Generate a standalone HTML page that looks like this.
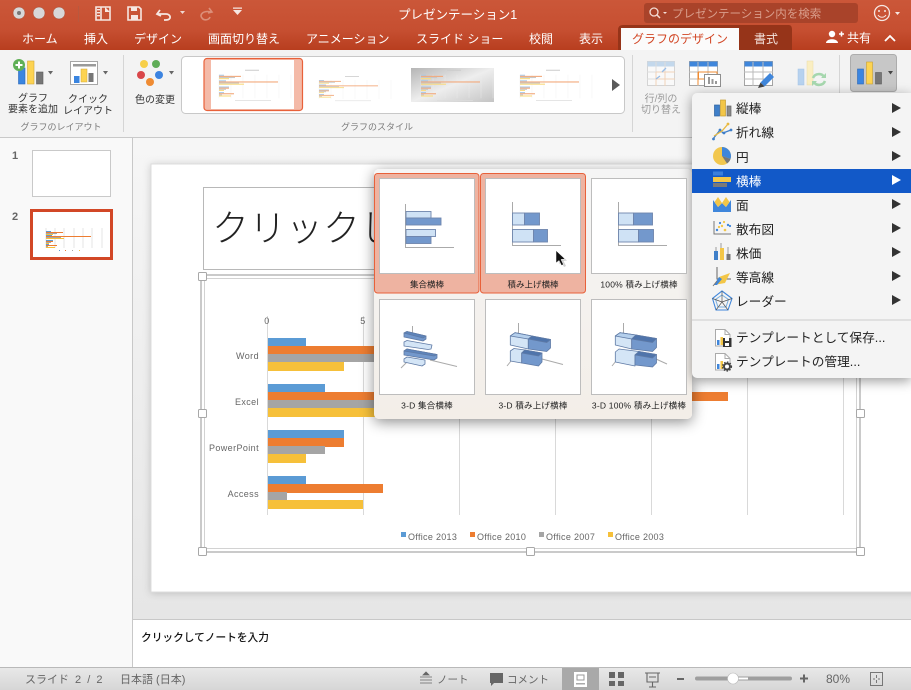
<!DOCTYPE html>
<html lang="ja"><head><meta charset="utf-8"><title>PowerPoint</title>
<style>
html,body{margin:0;padding:0;width:911px;height:690px;overflow:hidden;background:#f9f9f9}
svg{position:absolute;left:0;top:0;font-family:"Liberation Sans","Noto Sans CJK JP",sans-serif}
.pop{position:absolute;left:374px;top:169px;width:318px;height:250px;border-radius:5px;background:linear-gradient(#f5f5f5,#f3eee8);box-shadow:0 3px 14px rgba(0,0,0,.45)}
.menu{position:absolute;left:692px;top:93px;width:219px;height:285px;border-radius:5px 0 0 5px;background:#f4f4f4;box-shadow:0 3px 12px rgba(0,0,0,.4)}
</style></head><body>
<svg width="911" height="690" viewBox="0 0 911 690">
<defs>
<linearGradient id="tb" x1="0" y1="0" x2="0" y2="1"><stop offset="0" stop-color="#cb5739"/><stop offset=".6" stop-color="#c64f31"/><stop offset="1" stop-color="#b83e1f"/></linearGradient>
<linearGradient id="st" x1="0" y1="0" x2="0" y2="1"><stop offset="0" stop-color="#e8e8e8"/><stop offset="1" stop-color="#d6d6d6"/></linearGradient>
<linearGradient id="ed" x1="0" y1="0" x2="0" y2="1"><stop offset="0" stop-color="#f6f6f6"/><stop offset="1" stop-color="#e6e6e6"/></linearGradient>
<linearGradient id="gr3" x1="0" y1="0" x2="1" y2="1"><stop offset="0" stop-color="#b5b5b5"/><stop offset=".5" stop-color="#eeeeee"/><stop offset="1" stop-color="#c4c4c4"/></linearGradient>
<filter id="sl" x="-5%" y="-5%" width="110%" height="110%"><feDropShadow dx="0" dy="1" stdDeviation="4" flood-color="#000" flood-opacity=".18"/></filter>
<g id="mini">
<g stroke="#ececec" stroke-width=".5"><path d="M0 6V44M12 6V44M24 6V44M36 6V44M48 6V44M60 6V44M72 6V44"/></g>
<rect x="0" y="6" width="5" height="1.800" fill="#a9c8e6"/><rect x="0" y="7.800" width="22" height="1.800" fill="#f2a97c"/><rect x="0" y="9.600" width="16" height="1.800" fill="#c8c8c8"/><rect x="0" y="11.400" width="10" height="1.800" fill="#f9dc82"/>
<rect x="0" y="15" width="7" height="1.800" fill="#a9c8e6"/><rect x="0" y="16.800" width="59" height="1.800" fill="#f2a97c"/><rect x="0" y="18.600" width="20" height="1.800" fill="#c8c8c8"/><rect x="0" y="20.400" width="25" height="1.800" fill="#f9dc82"/>
<rect x="0" y="25" width="10" height="1.800" fill="#a9c8e6"/><rect x="0" y="26.800" width="10" height="1.800" fill="#f2a97c"/><rect x="0" y="28.600" width="7" height="1.800" fill="#c8c8c8"/><rect x="0" y="30.400" width="5" height="1.800" fill="#f9dc82"/>
<rect x="0" y="34" width="5" height="1.800" fill="#a9c8e6"/><rect x="0" y="35.800" width="15" height="1.800" fill="#f2a97c"/><rect x="0" y="37.600" width="3" height="1.800" fill="#c8c8c8"/><rect x="0" y="39.400" width="12" height="1.800" fill="#f9dc82"/>
<rect x="16" y="47" width="36" height="1.200" fill="#ddd"/>
<rect x="26" y="-2" width="14" height="1.600" fill="#ccc"/>
</g>
</defs>

<!-- base -->
<rect width="911" height="690" fill="#f9f9f9"/>
<rect x="133" y="138" width="778" height="482" fill="url(#ed)"/>
<rect x="132" y="138" width="1" height="530" fill="#c8c8c8"/>

<!-- title & tabs -->
<rect width="911" height="50" fill="url(#tb)"/>
<g fill="#d8d8d8" stroke="#a8492f" stroke-width=".5"><circle cx="19" cy="13" r="6"/><circle cx="39" cy="13" r="6"/><circle cx="59" cy="13" r="6"/></g>
<circle cx="19" cy="13" r="2" fill="#777"/>
<rect x="78" y="6" width="1" height="16" fill="#b9583e"/>
<g fill="none" stroke="#f6e7e2" stroke-width="1.6">
<path d="M96 7H110V20H96ZM101 7V20"/>
<path d="M128 7H139L141 9V20H128Z"/>
<path d="M160 10L157 14L161 16M158 14H166C171 14 172 20 166 20H164" stroke-width="1.8"/>
</g>
<rect x="97" y="9" width="3" height="1.4" fill="#f6e7e2"/><rect x="97" y="12" width="3" height="1.4" fill="#f6e7e2"/><rect x="97" y="15" width="3" height="1.4" fill="#f6e7e2"/>
<path d="M105 7L110 12H105Z" fill="#f6e7e2"/>
<rect x="131" y="7" width="6" height="4" fill="#f6e7e2"/><rect x="131" y="15" width="7" height="5" fill="#f6e7e2"/>
<path d="M180 11H185L182.500 14Z" fill="#f0d8d0"/>
<path d="M209 8L212 12L208 13M211 12C203 10 199 15 202 18C204 21 209 20 210 17" fill="none" stroke="#dc8f79" stroke-width="1.6"/>
<path d="M233 10H242L237.500 15ZM233 7.500H242V8.800H233Z" fill="#f6e7e2"/>
<text x="398" y="19" font-size="12.500" fill="#fff">プレゼンテーション1</text>
<rect x="644" y="3" width="214" height="20" rx="3" fill="#a9432a"/>
<circle cx="654" cy="12" r="4" fill="none" stroke="#f4ddd5" stroke-width="1.300"/><path d="M657 15L660 18" stroke="#f4ddd5" stroke-width="1.500"/><path d="M663 12H667L665 14Z" fill="#f4ddd5"/>
<text x="672" y="17.500" font-size="11.500" fill="#d99d8b">プレゼンテーション内を検索</text>
<circle cx="882" cy="13" r="7.500" fill="none" stroke="#f6e7e2" stroke-width="1.300"/><circle cx="879" cy="11" r="1" fill="#f6e7e2"/><circle cx="885" cy="11" r="1" fill="#f6e7e2"/><path d="M878 15C880 18 884 18 886 15" fill="none" stroke="#f6e7e2"/>
<path d="M895 12H900L897.500 15Z" fill="#f6e7e2"/>
<g font-size="12" fill="#fff">
<text x="22" y="43">ホーム</text><text x="84" y="43">挿入</text><text x="134" y="43">デザイン</text><text x="208" y="43">画面切り替え</text><text x="306" y="43">アニメーション</text><text x="416" y="43">スライド ショー</text><text x="529" y="43">校閲</text><text x="579" y="43">表示</text>
</g>
<path d="M618 50V30Q618 25 623 25H789Q792 25 792 30V50Z" fill="#963419"/>
<rect x="621" y="28" width="118" height="22" fill="#fbfbfb"/>
<text x="632" y="43" font-size="12" fill="#d24726">グラフのデザイン</text>
<text x="754" y="43" font-size="12" fill="#f3e2dc">書式</text>
<circle cx="832" cy="34" r="3.200" fill="#fff"/><path d="M826 43C826 38 838 38 838 43Z" fill="#fff"/><path d="M839 34H844M841.500 31.500V36.500" stroke="#fff" stroke-width="1.500"/>
<text x="847" y="42" font-size="12" fill="#fff">共有</text>
<path d="M885 41L890 36L895 41" fill="none" stroke="#fff" stroke-width="1.800"/>

<!-- ribbon -->
<rect y="50" width="911" height="87" fill="#f3f3f3"/>
<rect y="137" width="911" height="1" fill="#c9c9c9"/>
<g fill="#d5d5d5"><rect x="123" y="55" width="1" height="77"/><rect x="632" y="55" width="1" height="77"/><rect x="839" y="55" width="1" height="77"/></g>

<!-- add element -->
<rect x="18.500" y="68" width="6.500" height="16" fill="#3a85e0" stroke="#2a68b8" stroke-width=".6"/>
<rect x="27.500" y="61" width="6.500" height="23" fill="#fdd351" stroke="#d2a838" stroke-width=".6"/>
<rect x="36.500" y="72" width="6.500" height="12" fill="#767676" stroke="#5c5c5c" stroke-width=".6"/>
<circle cx="19" cy="65" r="6" fill="#5fb056"/><path d="M15.500 65H22.500M19 61.500V68.500" stroke="#fff" stroke-width="2"/>
<path d="M48 71H53L50.500 74.500Z" fill="#666"/>
<rect x="70.500" y="61.500" width="27" height="23" fill="#fff" stroke="#a6a6a6"/>
<rect x="73" y="64" width="23" height="2.500" fill="#9a9a9a"/>
<rect x="74" y="76" width="5.500" height="7" fill="#3a85e0"/><rect x="81" y="69" width="6" height="13" fill="#fdd351" stroke="#d2a838" stroke-width=".5"/><rect x="88.500" y="73" width="5" height="9" fill="#767676"/>
<path d="M103 71H108L105.500 74.500Z" fill="#666"/>
<circle cx="144" cy="64" r="4" fill="#f7cf49"/><circle cx="156" cy="64" r="4" fill="#60ad58"/><circle cx="141" cy="75" r="4" fill="#d9474a"/><circle cx="159" cy="75" r="4" fill="#3d84e0"/><circle cx="150" cy="82" r="4" fill="#ef8b32"/>
<path d="M169 71H174L171.500 74.500Z" fill="#666"/>
<g font-size="10" fill="#333" text-anchor="middle">
<text x="33" y="101.500">グラフ</text><text x="33" y="112.500">要素を追加</text>
<text x="88" y="102.500">クイック</text><text x="88" y="114">レイアウト</text>
<text x="155" y="103">色の変更</text>
</g>
<g font-size="9" fill="#7a7a7a" text-anchor="middle"><text x="61" y="130">グラフのレイアウト</text><text x="377" y="130">グラフのスタイル</text></g>

<!-- style gallery -->
<rect x="181.500" y="56.500" width="443" height="57" rx="4" fill="#fff" stroke="#c8c8c8"/>
<rect x="204" y="58.500" width="98.500" height="52" rx="3" fill="#f4baa8" stroke="#e8613a" stroke-width="1.200"/>
<rect x="211" y="60" width="83" height="49" fill="#fff"/>
<use href="#mini" transform="translate(219,71) scale(1,.62)"/>
<use href="#mini" transform="translate(319,77) scale(1,.5)"/>
<rect x="411" y="68" width="83" height="34" fill="url(#gr3)"/>
<use href="#mini" transform="translate(421,71) scale(1,.62)"/>
<use href="#mini" transform="translate(520,71) scale(1,.62)"/>
<path d="M612 79L620 85L612 91Z" fill="#5a5a5a"/>

<!-- data icons -->
<g opacity=".55">
<rect x="647.500" y="61.500" width="27" height="24" fill="#fff" stroke="#bbb"/><rect x="647.500" y="61.500" width="27" height="5" fill="#9dc3e8"/>
<path d="M647 72H675M647 79H675M656 62V86M665 62V86" stroke="#ccc"/>
<path d="M656 72H675M656 79H675M665 72V86M656 72V86" stroke="#f0b98a" fill="none"/>
<path d="M656 79L660 76M666 68L662 72" stroke="#4f90dc" stroke-width="1.300"/>
</g>
<rect x="689.500" y="61.500" width="28" height="24" fill="#fff" stroke="#a5a5a5"/><rect x="689.500" y="61.500" width="28" height="5" fill="#3f86db"/>
<path d="M689 72H718M689 79H718M698 62V86M708 62V86" stroke="#bbb"/>
<path d="M698.500 72H717V79H698.500Z" fill="none" stroke="#ef8b32"/>
<path d="M698 72V85" stroke="#ef8b32"/>
<rect x="704.500" y="74.500" width="16" height="12" fill="#fff" stroke="#8e8e8e"/><path d="M708 77H710V84H708ZM711.500 79H713.500V84H711.500ZM715 81H717V84H715Z" fill="#999"/>
<rect x="744.500" y="61.500" width="28" height="24" fill="#fff" stroke="#a5a5a5"/><rect x="744.500" y="61.500" width="28" height="5" fill="#3f86db"/>
<path d="M744 72H773M744 79H773M753 62V86M763 62V86" stroke="#bbb"/>
<path d="M760.500 82.500L770 73L774 77L764.500 86.500Z" fill="#3f86db"/><path d="M760.500 82.500L758 88L764.500 86.500Z" fill="#444"/>
<rect x="798" y="69" width="6" height="16" fill="#b7d2ef" stroke="#a4c4e6" stroke-width=".5"/><rect x="807" y="61" width="6" height="24" fill="#faeec2" stroke="#ecdca6" stroke-width=".5"/>
<path d="M813 78C815 73 822 73 824 77M825 81C823 86 816 86 814 82" fill="none" stroke="#a6d7ae" stroke-width="2.600"/>
<path d="M821 78L826 78L826 73Z M817 81L812 81L812 86Z" fill="#a6d7ae"/>
<rect x="850.500" y="54.500" width="46" height="37" rx="3" fill="#c7c7c7" stroke="#acacac"/>
<rect x="857.500" y="69" width="6" height="15" fill="#3a85e0" stroke="#2a68b8" stroke-width=".6"/><rect x="866.500" y="62" width="6" height="22" fill="#fdd351" stroke="#c8a030" stroke-width=".6"/><rect x="875.500" y="72.500" width="6" height="11.500" fill="#767676" stroke="#5c5c5c" stroke-width=".6"/>
<path d="M888 71H893L890.500 74.500Z" fill="#444"/>
<g font-size="10" fill="#9a9a9a" text-anchor="middle"><text x="661" y="102">行/列の</text><text x="661" y="113">切り替え</text></g>

<!-- slide panel -->
<text x="12" y="159" font-size="11" font-weight="bold" fill="#666">1</text>
<text x="12" y="220" font-size="11" font-weight="bold" fill="#666">2</text>
<rect x="32.500" y="150.500" width="78" height="46" fill="#fff" stroke="#c9c9c9"/>
<rect x="31.500" y="210.500" width="80" height="48" fill="#fff" stroke="#d24726" stroke-width="3"/>
<g stroke="#dcdcdc" stroke-width=".7"><path d="M46 228V248M55 228V248M64 228V248M74 228V248M83 228V248M92 228V248M102 228V248"/></g>
<rect x="46" y="231" width="5" height="1" fill="#5b9bd5"/><rect x="46" y="232" width="17" height="1" fill="#ed7d31"/><rect x="46" y="233" width="11" height="1" fill="#a5a5a5"/><rect x="46" y="234" width="7" height="1" fill="#f6c03a"/>
<rect x="46" y="235" width="6" height="1" fill="#5b9bd5"/><rect x="46" y="236" width="45" height="1" fill="#ed7d31"/><rect x="46" y="237" width="15" height="1" fill="#a5a5a5"/><rect x="46" y="238" width="18" height="1" fill="#f6c03a"/>
<rect x="46" y="240" width="7" height="1" fill="#5b9bd5"/><rect x="46" y="241" width="7" height="1" fill="#ed7d31"/><rect x="46" y="242" width="5" height="1" fill="#a5a5a5"/><rect x="46" y="243" width="3" height="1" fill="#f6c03a"/>
<rect x="46" y="244" width="3" height="1" fill="#5b9bd5"/><rect x="46" y="245" width="11" height="1" fill="#ed7d31"/><rect x="46" y="246" width="2" height="1" fill="#a5a5a5"/><rect x="46" y="247" width="9" height="1" fill="#f6c03a"/>
<rect x="59" y="250" width="1" height="1" fill="#5b9bd5"/><rect x="65" y="250" width="1" height="1" fill="#ed7d31"/><rect x="72" y="250" width="1" height="1" fill="#a5a5a5"/><rect x="79" y="250" width="1" height="1" fill="#f6c03a"/>

<!-- slide -->
<rect x="151" y="164" width="770" height="428" fill="#fff" stroke="#dcdcdc" filter="url(#sl)"/>
<rect x="203.500" y="187.500" width="660" height="82" fill="#fff" stroke="#b8b8b8"/>
<text x="212" y="241" font-size="37" fill="#222" font-weight="300">クリックしてタイトルを入力</text>

<!-- chart frame -->
<rect x="201" y="275" width="659" height="277" fill="#fff" stroke="#b9b9b9" stroke-width="1.500"/>
<rect x="204.500" y="278.500" width="652" height="270" fill="#fff" stroke="#d2d2d2"/>
<g stroke="#d9d9d9"><path d="M267.500 316V515M363.500 316V515M459.500 316V515M555.500 316V515M651.500 316V515M747.500 316V515M843.500 316V515"/></g>
<g font-size="9" fill="#666" letter-spacing=".4">
<text x="267" y="324" text-anchor="middle">0</text><text x="363" y="324" text-anchor="middle">5</text>
<text x="259" y="359" text-anchor="end">Word</text><text x="259" y="405" text-anchor="end">Excel</text><text x="259" y="451" text-anchor="end">PowerPoint</text><text x="259" y="497" text-anchor="end">Access</text>
<text x="408" y="540" letter-spacing=".3">Office 2013</text><text x="477" y="540" letter-spacing=".3">Office 2010</text><text x="546" y="540" letter-spacing=".3">Office 2007</text><text x="615" y="540" letter-spacing=".3">Office 2003</text>
</g>
<rect x="401" y="532" width="5" height="5" fill="#5b9bd5"/><rect x="470" y="532" width="5" height="5" fill="#ed7d31"/><rect x="539" y="532" width="5" height="5" fill="#a5a5a5"/><rect x="608" y="532" width="5" height="5" fill="#f6c03a"/>
<!-- bars -->
<rect x="268" y="338" width="38" height="8" fill="#5b9bd5"/><rect x="268" y="346" width="210" height="8" fill="#ed7d31"/><rect x="268" y="354" width="190" height="8" fill="#a5a5a5"/><rect x="268" y="362" width="76" height="9" fill="#f6c03a"/>
<rect x="268" y="384" width="57" height="8" fill="#5b9bd5"/><rect x="268" y="392" width="460" height="9" fill="#ed7d31"/><rect x="268" y="400" width="190" height="8" fill="#a5a5a5"/><rect x="268" y="408" width="250" height="9" fill="#f6c03a"/>
<rect x="268" y="430" width="76" height="8" fill="#5b9bd5"/><rect x="268" y="438" width="76" height="9" fill="#ed7d31"/><rect x="268" y="446" width="57" height="8" fill="#a5a5a5"/><rect x="268" y="454" width="38" height="9" fill="#f6c03a"/>
<rect x="268" y="476" width="38" height="8" fill="#5b9bd5"/><rect x="268" y="484" width="115" height="9" fill="#ed7d31"/><rect x="268" y="492" width="19" height="8" fill="#a5a5a5"/><rect x="268" y="500" width="95" height="9" fill="#f6c03a"/>
<g fill="#fff" stroke="#a8a8a8"><rect x="198.500" y="272.500" width="8" height="8" rx="1"/><rect x="198.500" y="409.500" width="8" height="8" rx="1"/><rect x="198.500" y="547.500" width="8" height="8" rx="1"/><rect x="526.500" y="547.500" width="8" height="8" rx="1"/><rect x="856.500" y="547.500" width="8" height="8" rx="1"/><rect x="856.500" y="409.500" width="8" height="8" rx="1"/></g>

<!-- notes -->
<rect x="133" y="620" width="778" height="48" fill="#fff"/>
<rect x="133" y="619" width="778" height="1" fill="#c8c8c8"/>
<text x="141" y="641" font-size="10.700" fill="#111" font-weight="500">クリックしてノートを入力</text>

<!-- status -->
<rect y="668" width="911" height="22" fill="url(#st)"/>
<rect y="667" width="911" height="1" fill="#b9b9b9"/>
<g font-size="10.500" fill="#666">
<text x="25" y="683" font-size="11" word-spacing="3">スライド 2 / 2</text><text x="120" y="683" font-size="11">日本語 (日本)</text><text x="437" y="683">ノート</text><text x="507" y="683">コメント</text><text x="826" y="683" font-size="12">80%</text>
</g>
<path d="M423 675L426 672L429 675Z M420 677H432M420 680H432M420 683H432" fill="#666" stroke="#666" stroke-width=".8"/>
<path d="M490 673H503V683H494L491 686V683H490Z" fill="#666"/>
<rect x="562" y="668" width="37" height="22" fill="#a9a9a9"/>
<rect x="574" y="672" width="13" height="15" fill="#fff"/><rect x="577" y="675" width="7" height="5" fill="none" stroke="#999"/><rect x="576" y="683" width="9" height="1.500" fill="#aaa"/>
<path d="M609 672H615V678H609ZM618 672H624V678H618ZM609 681H615V686H609ZM618 681H624V686H618Z" fill="#666"/>
<path d="M645 673H660M647 673V682H658V673M652.500 682V687M649 687H656M649 677H656" fill="none" stroke="#666" stroke-width="1.100"/>
<rect x="677" y="678" width="7" height="2" fill="#666"/>
<rect x="695" y="676.500" width="97" height="4" rx="2" fill="#9e9e9e"/>
<rect x="738" y="677.500" width="10" height="2" fill="#fff"/>
<circle cx="733" cy="678.500" r="5.500" fill="#fff" stroke="#bbb" stroke-width=".6"/>
<path d="M800 678.500H808M804 674.500V682.500" stroke="#666" stroke-width="2"/>
<rect x="870.500" y="672.500" width="12" height="13" fill="none" stroke="#777"/><path d="M876.500 675V678M876.500 680V683M873 679H875M878 679H880" stroke="#777"/>
</svg>

<div class="pop"></div>
<div class="menu"></div>

<svg width="911" height="690" viewBox="0 0 911 690">
<!-- gallery popup -->
<rect x="374.500" y="173.500" width="104.500" height="119.500" rx="3" fill="#eeb3a1" stroke="#e8613a"/>
<rect x="480.500" y="173.500" width="105" height="119.500" rx="3" fill="#eeb3a1" stroke="#e8613a"/>
<g fill="#fff" stroke="#bdbdbd">
<rect x="379.500" y="178.500" width="95" height="95"/><rect x="485.500" y="178.500" width="95" height="95"/><rect x="591.500" y="178.500" width="95" height="95"/>
<rect x="379.500" y="299.500" width="95" height="95"/><rect x="485.500" y="299.500" width="95" height="95"/><rect x="591.500" y="299.500" width="95" height="95"/>
</g>
<g font-size="8.500" fill="#222" text-anchor="middle">
<text x="427" y="287.500">集合横棒</text><text x="533" y="287.500">積み上げ横棒</text><text x="639" y="287.500" letter-spacing=".2">100% 積み上げ横棒</text>
<text x="427" y="408.500" letter-spacing=".2">3-D 集合横棒</text><text x="533" y="408.500" letter-spacing=".2">3-D 積み上げ横棒</text><text x="639" y="408.500" letter-spacing=".2">3-D 100% 積み上げ横棒</text>
</g>
<g fill="none" stroke="#aaa" stroke-width="1">
<path d="M405.500 204V247.500H454"/><path d="M512.500 202V245.500H561"/><path d="M618.500 202V245.500H667"/>
</g>
<g stroke="#6f86ad" stroke-width=".9">
<rect x="406" y="211.500" width="25" height="6.500" fill="#cfe2f5"/><rect x="406" y="218" width="35" height="7" fill="#7398cc"/><rect x="406" y="229.500" width="29.500" height="7" fill="#cfe2f5"/><rect x="406" y="236.500" width="25" height="7" fill="#7398cc"/>
<rect x="512.500" y="213" width="12" height="12" fill="#cfe2f5"/><rect x="524.500" y="213" width="15" height="12" fill="#7398cc"/><rect x="512.500" y="229.500" width="21" height="12.500" fill="#cfe2f5"/><rect x="533.500" y="229.500" width="14" height="12.500" fill="#7398cc"/>
<rect x="618.500" y="213" width="15" height="12" fill="#cfe2f5"/><rect x="633.500" y="213" width="19" height="12" fill="#7398cc"/><rect x="618.500" y="229.500" width="20" height="12.500" fill="#cfe2f5"/><rect x="638.500" y="229.500" width="15" height="12.500" fill="#7398cc"/>
</g>
<!-- 3D -->
<g fill="none" stroke="#aaa"><path d="M412.500 326V334M401 368L407 362M430 360L457 366.500"/><path d="M518.500 323V333M507 366L511 361M542 359L563 364.500"/><path d="M623.500 323V333M612 366L616 361M656 359L667 364"/></g>
<g stroke="#5f7aa5" stroke-width=".8" stroke-linejoin="round">
<path d="M404 333L407 331.500L426 336L426 339L423 341L404 337Z" fill="#7398cc"/>
<path d="M404 333L407 331.500L426 336L423 338Z" fill="#5d84bb"/>
<path d="M404 342L407 340.500L432 345L431 349L428 349.500L404 346Z" fill="#d4e5f6"/>
<path d="M404 351L407 349L437 354.500L437 358L434 360L404 355Z" fill="#7398cc"/>
<path d="M404 351L407 349L437 354.500L434 356Z" fill="#5d84bb"/>
<path d="M404 359L407 357L425 360L425 364L422 366L404 362Z" fill="#d4e5f6"/>
<!-- item5 -->
<path d="M510.300 336L515 332.700L532 336L528.300 339V349L510.300 345Z" fill="#d4e5f6"/>
<path d="M510.300 336L515 332.700L532 336L528.300 339Z" fill="#b4cfec"/>
<path d="M528.300 339L532 336L550.500 339.500V348L546.700 351.500L528.300 349Z" fill="#7398cc"/>
<path d="M528.300 339L532 336L550.500 339.500L546.700 342.500Z" fill="#4f74ab"/>
<path d="M510.300 351L514 348.500L525 350L521.700 353V363L510.300 361Z" fill="#d4e5f6"/>
<path d="M521.700 353L525 350L542 353V362L538.500 366L521.700 363Z" fill="#7398cc"/>
<path d="M521.700 353L525 350L542 353L538.500 356Z" fill="#4f74ab"/>
<!-- item6 -->
<path d="M615.300 336L620 332.700L636 335L631.700 339V349L615.300 345Z" fill="#d4e5f6"/>
<path d="M615.300 336L620 332.700L636 335L631.700 339Z" fill="#b4cfec"/>
<path d="M631.700 339L636 335L656.500 338.500V347.500L652.500 351.500L631.700 349Z" fill="#7398cc"/>
<path d="M631.700 339L636 335L656.500 338.500L652.500 342.500Z" fill="#4f74ab"/>
<path d="M615.300 352L619 349L639 351.500L635 355V366L615.300 362Z" fill="#d4e5f6"/>
<path d="M635 355L639 351.500L656.500 354.500V363L652.500 367L635 365Z" fill="#7398cc"/>
<path d="M635 355L639 351.500L656.500 354.500L652.500 358Z" fill="#4f74ab"/>
</g>
<!-- cursor -->
<path d="M557 252L558 263L560.500 261L563 266L565 265L562.500 260L566 259.500Z" fill="#777" opacity=".35" transform="translate(1,1)"/>
<path d="M556 250.500V263L559 260.500L561.500 265.500L563.500 264.500L561 259.500L565 259Z" fill="#111" stroke="#fff" stroke-width=".5"/>

<!-- chart menu -->
<rect x="692" y="169" width="219" height="24" fill="#1259c8"/>
<g font-size="12.700" fill="#222">
<text x="736" y="113">縦棒</text><text x="736" y="137">折れ線</text><text x="736" y="162">円</text><text x="736" y="186" fill="#fff">横棒</text><text x="736" y="210">面</text><text x="736" y="234">散布図</text><text x="736" y="258">株価</text><text x="736" y="282">等高線</text><text x="736" y="306">レーダー</text><text x="736" y="342">テンプレートとして保存...</text><text x="736" y="366">テンプレートの管理...</text>
</g>
<g fill="#333"><path d="M892 103L901 108L892 113ZM892 127L901 132L892 137ZM892 151L901 156L892 161ZM892 199L901 204L892 209ZM892 223L901 228L892 233ZM892 247L901 252L892 257ZM892 271L901 276L892 281ZM892 295L901 300L892 305Z"/></g>
<path d="M892 175L901 180L892 185Z" fill="#fff"/>
<rect x="692" y="319" width="219" height="2" fill="#e0e0e0"/>
<!-- 縦棒 -->
<rect x="714.500" y="105" width="5" height="11" fill="#3f7fc9" stroke="#2a5f9e" stroke-width=".7"/><rect x="720.500" y="100" width="5" height="16" fill="#f3c647" stroke="#c59c2e" stroke-width=".7"/><rect x="727" y="106" width="4" height="10" fill="#8a8a8a" stroke="#666" stroke-width=".7"/>
<!-- 折れ線 -->
<path d="M713 139L720 130L723 133L731 130" fill="none" stroke="#3f7fc9" stroke-width="1.300"/><path d="M714 136L722 131L728 124" fill="none" stroke="#e9b93f" stroke-width="1.300"/>
<circle cx="713.500" cy="139" r="1.400" fill="#3f7fc9"/><circle cx="720" cy="130" r="1.400" fill="#3f7fc9"/><circle cx="724" cy="133" r="1.400" fill="#3f7fc9"/><circle cx="731" cy="130" r="1.400" fill="#3f7fc9"/><circle cx="728" cy="124" r="1.400" fill="#e9b93f"/>
<!-- 円 -->
<circle cx="722" cy="156" r="9" fill="#f2c74e"/><path d="M722 156V147A9 9 0 0 1 730.500 159Z" fill="#3f86db"/><path d="M722 156L730.500 159A9 9 0 0 1 727 163.500Z" fill="#777"/>
<!-- 横棒 -->
<rect x="713" y="171.500" width="10" height="4" fill="#3a7fdc"/><rect x="713" y="177" width="18" height="5" fill="#f3c647"/><rect x="713" y="183" width="14" height="4" fill="#7a7a7a"/>
<!-- 面 -->
<path d="M713 200L718 207L722 203L726 207L731 200V212H713Z" fill="#3f86db"/><path d="M718 197L722 203L718 207L714.500 202ZM726 197L729.500 202L726 207L722 203Z" fill="#f3c647"/>
<!-- 散布 -->
<path d="M714 221V234H731" fill="none" stroke="#777"/>
<circle cx="720" cy="223" r="1.100" fill="#3f86db"/><circle cx="724" cy="222" r="1.100" fill="#f3c647"/><circle cx="728" cy="225" r="1.200" fill="#3f86db"/><circle cx="722" cy="226" r="1.200" fill="#f3c647"/><circle cx="717" cy="230" r="1.200" fill="#3f86db"/><circle cx="725" cy="230" r="1.300" fill="#f3c647"/><circle cx="719" cy="227" r="1.100" fill="#f3c647"/><circle cx="730" cy="226" r="1.100" fill="#3f86db"/>
<!-- 株価 -->
<path d="M716 247V260M721 243V260M728 247V260" stroke="#888" stroke-width=".8"/>
<rect x="714" y="251" width="4" height="9" fill="#3f7fc9"/><rect x="720" y="248" width="4" height="12" fill="#f3c647"/><rect x="726.500" y="254" width="4" height="6" fill="#777"/>
<!-- 等高線 -->
<path d="M717 267V279H731" fill="none" stroke="#666"/><path d="M714 285L719 277L730 273L725 283Z" fill="#f3c647"/><path d="M714 285L719 277L722 279L717 285Z" fill="#3f86db"/><path d="M713 286L717 281" stroke="#777"/>
<!-- レーダー -->
<path d="M722 291L732 298.500L728 310H716L712.500 298.500Z" fill="none" stroke="#3f86db" stroke-width="1.100"/><path d="M722 295L728.500 299.500L726 307H718L715.500 299.500Z" fill="none" stroke="#79aede"/><path d="M722 291V302M732 298.500L722 302M728 310L722 302M716 310L722 302M712.500 298.500L722 302" stroke="#555" stroke-width=".7"/>
<!-- template icons -->
<path d="M715.500 329.500H725L730 334.500V346H715.500Z" fill="#fff" stroke="#aaa"/><path d="M725 329.500V334.500H730" fill="none" stroke="#aaa"/>
<rect x="717" y="340" width="2.500" height="5" fill="#3f86db"/><rect x="720.500" y="337" width="2.500" height="8" fill="#f3c647"/>
<rect x="723" y="338" width="8.500" height="9" fill="#333"/><rect x="725" y="338" width="4" height="3" fill="#fff"/><rect x="725" y="343" width="4" height="3" fill="#fff"/>
<path d="M715.500 353.500H725L730 358.500V370H715.500Z" fill="#fff" stroke="#aaa"/><path d="M725 353.500V358.500H730" fill="none" stroke="#aaa"/>
<rect x="717" y="364" width="2.500" height="5" fill="#3f86db"/><rect x="720.500" y="361" width="2.500" height="8" fill="#f3c647"/>
<circle cx="727" cy="366.500" r="3" fill="none" stroke="#444" stroke-width="2"/><circle cx="727" cy="366.500" r="4.500" fill="none" stroke="#444" stroke-width="1.200" stroke-dasharray="1.500 1.500"/>
</svg>
</body></html>
